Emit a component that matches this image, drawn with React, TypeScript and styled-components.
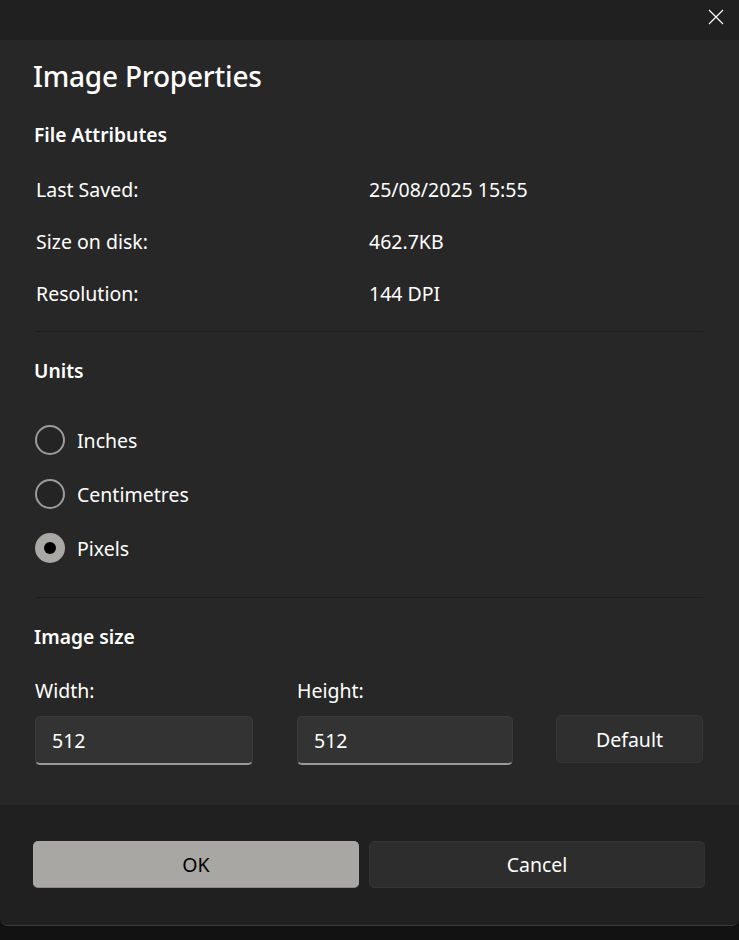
import React from "react";
import styled, { createGlobalStyle } from "styled-components";

const Global = createGlobalStyle`
  html, body { margin: 0; padding: 0; background: #121212; }
  body { font-family: "Noto Sans", "Open Sans", sans-serif; color: #fff; }
  * { box-sizing: border-box; }
`;

const Window = styled.div`
  width: 739px;
  height: 926px;
  display: flex;
  flex-direction: column;
  border-bottom: 1px solid #3d3d3d;
  border-radius: 0 0 8px 8px;
  overflow: hidden;
  background: #202020;
`;

const TitleBar = styled.div`
  height: 40px;
  background: #202020;
  display: flex;
  justify-content: flex-end;
  align-items: flex-start;
`;

const CloseButton = styled.button`
  width: 46px;
  height: 34px;
  border: none;
  background: transparent;
  display: flex;
  align-items: center;
  justify-content: center;
  padding: 0;
`;

const Body = styled.div`
  background: #272727;
  height: 765px;
  padding: 18px 36px 0 33px;
  display: flex;
  flex-direction: column;
`;

const Title = styled.h1`
  margin: 0;
  font-size: 28px;
  line-height: 36px;
  font-weight: 500;
  letter-spacing: -0.2px;
`;

const SectionTitle = styled.h2<{ $mt: number }>`
  margin: ${(p) => p.$mt}px 0 0 1px;
  font-size: 19.3px;
  line-height: 28px;
  font-weight: 600;
`;

const AttrList = styled.div`
  margin-top: 14px;
  display: flex;
  flex-direction: column;
`;

const AttrRow = styled.div`
  height: 52px;
  display: grid;
  grid-template-columns: 333px 1fr;
  align-items: center;
  padding-left: 3px;
  font-size: 19.5px;
`;

const Divider = styled.hr<{ $mt: number }>`
  margin: ${(p) => p.$mt}px 0 0 3px;
  border: none;
  height: 1px;
  background: #1d1d1d;
`;

const RadioGroup = styled.div`
  margin-top: 28px;
  display: flex;
  flex-direction: column;
`;

const RadioRow = styled.label`
  height: 54px;
  display: flex;
  align-items: center;
  gap: 12px;
  padding-left: 2px;
  font-size: 19.5px;
`;

const RadioCircle = styled.span<{ $checked: boolean }>`
  width: 30px;
  height: 30px;
  border-radius: 50%;
  border: ${(p) => (p.$checked ? "none" : "2px solid #9c9c9c")};
  background: ${(p) => (p.$checked ? "#a9a8a4" : "#242424")};
  display: flex;
  align-items: center;
  justify-content: center;
  &::after {
    content: "";
    display: ${(p) => (p.$checked ? "block" : "none")};
    width: 12px;
    height: 12px;
    border-radius: 50%;
    background: #000;
  }
`;

const SizeGrid = styled.div`
  margin-top: 26px;
  display: grid;
  grid-template-columns: 218px 216px 147px;
  column-gap: 44px;
  row-gap: 11px;
  padding-left: 2px;
`;

const FieldLabel = styled.div`
  font-size: 19.5px;
  line-height: 28px;
`;

const Input = styled.div`
  height: 49px;
  background: #333333;
  border: 1px solid #3a3a3a;
  border-bottom: 2px solid #9a9a9a;
  border-radius: 5px;
  display: flex;
  align-items: center;
  padding-left: 16px;
  font-size: 19.5px;
`;

const DefaultButton = styled.button`
  justify-self: start;
  width: 147px;
  height: 48px;
  margin-top: -1px;
  margin-left: -1px;
  background: #2f2f2f;
  border: 1px solid #353535;
  border-radius: 5px;
  color: #fff;
  font-family: inherit;
  font-size: 19.5px;
`;

const Footer = styled.div`
  flex: 1;
  background: #202020;
  padding: 36px 34px 0 33px;
  display: grid;
  grid-template-columns: 326px 1fr;
  column-gap: 10px;
  align-content: start;
`;

const FooterButton = styled.button<{ $primary?: boolean }>`
  height: 47px;
  border-radius: 5px;
  font-family: inherit;
  font-size: 19.5px;
  color: ${(p) => (p.$primary ? "#000" : "#fff")};
  background: ${(p) => (p.$primary ? "#a8a7a3" : "#2d2d2d")};
  border: 1px solid ${(p) => (p.$primary ? "#a8a7a3" : "#323232")};
  border-bottom: 1px solid ${(p) => (p.$primary ? "#8d8c89" : "#363636")};
`;

const attrs = [
  ["Last Saved:", "25/08/2025 15:55"],
  ["Size on disk:", "462.7KB"],
  ["Resolution:", "144 DPI"],
];

const units = [
  { label: "Inches", checked: false },
  { label: "Centimetres", checked: false },
  { label: "Pixels", checked: true },
];

export default function App() {
  return (
    <>
      <Global />
      <Window>
        <TitleBar>
          <CloseButton aria-label="Close">
            <svg width="16" height="16" viewBox="0 0 16 16">
              <path d="M1 1 L15 15 M15 1 L1 15" stroke="#fff" strokeWidth="1.2" fill="none" />
            </svg>
          </CloseButton>
        </TitleBar>
        <Body>
          <Title>Image Properties</Title>
          <SectionTitle $mt={27}>File Attributes</SectionTitle>
          <AttrList>
            {attrs.map(([k, v]) => (
              <AttrRow key={k}>
                <span>{k}</span>
                <span>{v}</span>
              </AttrRow>
            ))}
          </AttrList>
          <Divider $mt={12} />
          <SectionTitle $mt={25}>Units</SectionTitle>
          <RadioGroup>
            {units.map((u) => (
              <RadioRow key={u.label}>
                <RadioCircle $checked={u.checked} />
                {u.label}
              </RadioRow>
            ))}
          </RadioGroup>
          <Divider $mt={22} />
          <SectionTitle $mt={25}>Image size</SectionTitle>
          <SizeGrid>
            <FieldLabel>Width:</FieldLabel>
            <FieldLabel>Height:</FieldLabel>
            <span />
            <Input>512</Input>
            <Input>512</Input>
            <DefaultButton>Default</DefaultButton>
          </SizeGrid>
        </Body>
        <Footer>
          <FooterButton $primary>OK</FooterButton>
          <FooterButton>Cancel</FooterButton>
        </Footer>
      </Window>
    </>
  );
}
